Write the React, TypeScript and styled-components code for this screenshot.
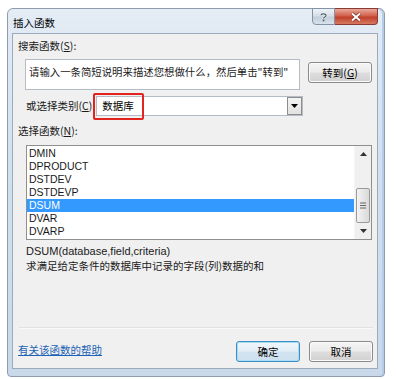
import * as React from "react";
import styled, { createGlobalStyle } from "styled-components";

const GlobalStyle = createGlobalStyle`
  html, body {
    margin: 0;
    padding: 0;
    background: #ffffff;
  }
  body {
    font-family: "Noto Sans", "Noto Sans CJK SC", sans-serif;
    font-size: 11px;
    color: #1a1a1a;
  }
`;

const SPage = styled.div`
  width: 396px;
  height: 379px;
  padding: 8px 0 0 7px;
  box-sizing: border-box;
`;

const SWindow = styled.div`
  width: 378px;
  height: 369px;
  box-sizing: border-box;
  border: 1px solid #8e9cac;
  border-radius: 6px 6px 4px 4px;
  background: linear-gradient(180deg, #e4ecf5 0%, #d3e0ee 40%, #c9d9ea 100%);
  box-shadow: inset -2px 0 0 #b4cdea;
  padding: 0 6px 7px 4px;
  display: flex;
  flex-direction: column;
`;

const STitleBar = styled.div`
  height: 24px;
  display: flex;
  align-items: flex-start;
  justify-content: space-between;
`;

const STitle = styled.span`
  margin-top: 8px;
  margin-left: 1px;
  font-family: "Noto Sans CJK SC", sans-serif;
  font-size: 10.5px;
  line-height: 12px;
  color: #000;
`;

const SCaptionButtons = styled.div`
  display: flex;
  margin-top: -1px;
  margin-right: 0;
`;

const SCaptionButton = styled.div<{ $close?: boolean }>`
  height: 17px;
  width: ${(p) => (p.$close ? "43px" : "23px")};
  box-sizing: border-box;
  border: 1px solid ${(p) => (p.$close ? "#8a3b33" : "#8393a6")};
  border-radius: ${(p) => (p.$close ? "0 0 4px 0" : "0 0 0 4px")};
  border-left-width: ${(p) => (p.$close ? "0" : "1px")};
  background: ${(p) =>
    p.$close
      ? "linear-gradient(180deg, #e9a99c 0%, #d2604c 45%, #c2402c 55%, #d67a5f 100%)"
      : "linear-gradient(180deg, #eef2f7 0%, #d6dee8 45%, #c3cfdc 55%, #d8e2ec 100%)"};
  display: flex;
  align-items: center;
  justify-content: center;
`;

const SClient = styled.div`
  flex: 1;
  background: #f0f0f0;
  border: 1px solid #9aabbd;
  padding: 5px 4px 6px 5px;
  display: flex;
  flex-direction: column;
`;

const SLabel = styled.div<{ $indent?: boolean }>`
  font-family: "Noto Sans CJK SC", sans-serif;
  font-size: 10.5px;
  line-height: 14px;
  height: 14px;
  margin-left: ${(p) => (p.$indent ? "8px" : "0")};
  white-space: nowrap;
  & u {
    text-decoration: underline;
  }
`;

const SSearchRow = styled.div`
  display: flex;
  align-items: flex-start;
  margin: 6px 0 0 7px;
`;

const SSearchBox = styled.div`
  width: 275px;
  height: 31px;
  box-sizing: border-box;
  background: #ffffff;
  border: 1px solid #b5bcc5;
  padding: 5px 0 0 3px;
  font-family: "Noto Sans CJK SC", sans-serif;
  font-size: 10.4px;
  line-height: 14px;
  white-space: nowrap;
  color: #222;
`;

const SButton = styled.div<{ $focused?: boolean }>`
  width: 64px;
  height: 21px;
  box-sizing: border-box;
  border: 1px solid ${(p) => (p.$focused ? "#3c8fc4" : "#8a8a8a")};
  border-radius: 3px;
  background: ${(p) =>
    p.$focused
      ? "linear-gradient(180deg, #f1f7fb 0%, #e2eef6 48%, #d2e4f0 52%, #cde0ee 100%)"
      : "linear-gradient(180deg, #f4f4f4 0%, #ebebeb 48%, #dddddd 52%, #d1d1d1 100%)"};
  box-shadow: ${(p) =>
    p.$focused ? "inset 0 0 0 1px #a8dcf5" : "inset 0 0 0 1px #fbfbfb"};
  display: flex;
  align-items: center;
  justify-content: center;
  font-family: "Noto Sans CJK SC", sans-serif;
  font-size: 10.5px;
  color: #000;
`;

const SGoButton = styled(SButton)`
  margin: 3px 0 0 8px;
`;

const SCategoryRow = styled.div`
  display: flex;
  align-items: center;
  margin: 6px 0 0 8px;
`;

const SComboWrap = styled.div`
  position: relative;
  margin-left: 1px;
`;

const SCombo = styled.div`
  width: 207px;
  height: 20px;
  box-sizing: border-box;
  background: #ffffff;
  border: 1px solid #b5bcc5;
  display: flex;
  align-items: stretch;
`;

const SComboText = styled.span`
  flex: 1;
  padding-left: 5px;
  line-height: 18px;
  font-family: "Noto Sans CJK SC", sans-serif;
  font-size: 10.5px;
  color: #000;
`;

const SComboArrow = styled.div`
  width: 15px;
  box-sizing: border-box;
  border: 1px solid #8d8d8d;
  background: linear-gradient(180deg, #f3f3f3 0%, #e2e2e2 100%);
  display: flex;
  align-items: center;
  justify-content: center;
`;

const SHighlightBox = styled.div`
  position: absolute;
  left: -3px;
  top: -3px;
  width: 51px;
  height: 27px;
  box-sizing: border-box;
  border: 2px solid #e3231f;
  border-radius: 2px;
`;

const SFunctionLabel = styled(SLabel)`
  margin-top: 8px;
`;

const SList = styled.div`
  margin: 7px 0 0 8px;
  width: 346px;
  height: 95px;
  box-sizing: border-box;
  border: 1px solid #8e8f8f;
  background: #ffffff;
  display: flex;
`;

const SItems = styled.div`
  flex: 1;
  padding-top: 1px;
`;

const SItem = styled.div<{ $selected?: boolean }>`
  height: 13px;
  line-height: 13px;
  padding-left: 2px;
  font-family: "Liberation Sans", Arial, sans-serif;
  font-size: 10.5px;
  color: ${(p) => (p.$selected ? "#ffffff" : "#1a1a1a")};
  background: ${(p) => (p.$selected ? "#3399ff" : "transparent")};
`;

const SScrollbar = styled.div`
  width: 16px;
  background: #f0f0f0;
  border-left: 1px solid #f6f6f6;
  display: flex;
  flex-direction: column;
  align-items: center;
`;

const SScrollArrow = styled.div`
  height: 16px;
  width: 16px;
  display: flex;
  align-items: center;
  justify-content: center;
`;

const STrack = styled.div`
  flex: 1;
  width: 100%;
  padding-top: 26px;
  box-sizing: border-box;
  display: flex;
  justify-content: center;
`;

const SThumb = styled.div`
  width: 14px;
  height: 35px;
  box-sizing: border-box;
  border: 1px solid #9a9a9a;
  border-radius: 2px;
  background: linear-gradient(90deg, #f3f3f3 0%, #e6e6e6 50%, #d9d9d9 100%);
  display: flex;
  align-items: center;
  justify-content: center;
`;

const SSignature = styled.div`
  margin: 4px 0 0 8px;
  height: 14px;
  line-height: 14px;
  font-family: "Liberation Sans", Arial, sans-serif;
  font-size: 11px;
  color: #1a1a1a;
`;

const SDescription = styled(SLabel)`
  margin: 1px 0 0 8px;
`;

const SSpacer = styled.div`
  flex: 1;
`;

const SSeparator = styled.div`
  height: 1px;
  margin: 0 0 0 1px;
  background: #e2e2e2;
  border-bottom: 1px solid #fafafa;
`;

const SFooter = styled.div`
  display: flex;
  align-items: center;
  margin-top: 12px;
`;

const SHelpLink = styled.a`
  font-family: "Noto Sans CJK SC", sans-serif;
  font-size: 10.5px;
  color: #1c63b7;
  text-decoration: underline;
  cursor: pointer;
  margin-top: -4px;
`;

const SFooterButtons = styled.div`
  margin-left: auto;
  display: flex;
  gap: 9px;
`;

const functions = ["DMIN", "DPRODUCT", "DSTDEV", "DSTDEVP", "DSUM", "DVAR", "DVARP"];

const App = () => {
  return (
    <SPage>
      <GlobalStyle />
      <SWindow>
        <STitleBar>
          <STitle>插入函数</STitle>
          <SCaptionButtons>
            <SCaptionButton>
              <svg width="9" height="10" viewBox="0 0 9 10">
                <path
                  d="M2 3.2 C2 1.3 7 1.3 7 3.4 C7 5 4.5 4.8 4.5 6.6"
                  fill="none"
                  stroke="#ffffff"
                  strokeWidth="2.2"
                />
                <path
                  d="M2 3.2 C2 1.3 7 1.3 7 3.4 C7 5 4.5 4.8 4.5 6.6"
                  fill="none"
                  stroke="#4d5d72"
                  strokeWidth="1.2"
                />
                <rect x="3.7" y="7.6" width="1.7" height="1.7" fill="#4d5d72" />
              </svg>
            </SCaptionButton>
            <SCaptionButton $close>
              <svg width="12" height="10" viewBox="0 0 12 10">
                <path d="M2 1.5 L10 8.5 M10 1.5 L2 8.5" stroke="#7a2a20" strokeWidth="3.4" />
                <path d="M2 1.5 L10 8.5 M10 1.5 L2 8.5" stroke="#ffffff" strokeWidth="2" />
              </svg>
            </SCaptionButton>
          </SCaptionButtons>
        </STitleBar>
        <SClient>
          <SLabel>
            搜索函数(<u>S</u>):
          </SLabel>
          <SSearchRow>
            <SSearchBox>请输入一条简短说明来描述您想做什么，然后单击"转到"</SSearchBox>
            <SGoButton>
              转到(<u>G</u>)
            </SGoButton>
          </SSearchRow>
          <SCategoryRow>
            <SLabel>
              或选择类别(<u>C</u>):
            </SLabel>
            <SComboWrap>
              <SCombo>
                <SComboText>数据库</SComboText>
                <SComboArrow>
                  <svg width="7" height="4" viewBox="0 0 7 4">
                    <path d="M0 0 L7 0 L3.5 4 Z" fill="#000" />
                  </svg>
                </SComboArrow>
              </SCombo>
              <SHighlightBox />
            </SComboWrap>
          </SCategoryRow>
          <SFunctionLabel>
            选择函数(<u>N</u>):
          </SFunctionLabel>
          <SList>
            <SItems>
              {functions.map((f) => (
                <SItem key={f} $selected={f === "DSUM"}>
                  {f}
                </SItem>
              ))}
            </SItems>
            <SScrollbar>
              <SScrollArrow>
                <svg width="7" height="4" viewBox="0 0 7 4">
                  <path d="M0 4 L7 4 L3.5 0 Z" fill="#333" />
                </svg>
              </SScrollArrow>
              <STrack>
                <SThumb>
                  <svg width="6" height="7" viewBox="0 0 6 7">
                    <path d="M0 1 H6 M0 3.5 H6 M0 6 H6" stroke="#666" strokeWidth="1" />
                  </svg>
                </SThumb>
              </STrack>
              <SScrollArrow>
                <svg width="7" height="4" viewBox="0 0 7 4">
                  <path d="M0 0 L7 0 L3.5 4 Z" fill="#333" />
                </svg>
              </SScrollArrow>
            </SScrollbar>
          </SList>
          <SSignature>DSUM(database,field,criteria)</SSignature>
          <SDescription>求满足给定条件的数据库中记录的字段(列)数据的和</SDescription>
          <SSpacer />
          <SSeparator />
          <SFooter>
            <SHelpLink>有关该函数的帮助</SHelpLink>
            <SFooterButtons>
              <SButton $focused>确定</SButton>
              <SButton>取消</SButton>
            </SFooterButtons>
          </SFooter>
        </SClient>
      </SWindow>
    </SPage>
  );
};

export default App;
